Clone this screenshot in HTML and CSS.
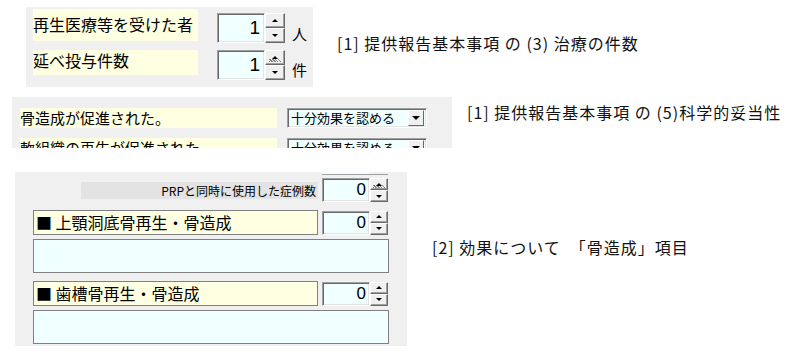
FILE: index.html
```html
<!DOCTYPE html>
<html lang="ja">
<head>
    <meta charset="UTF-8">
    <title>提供報告</title>
    <link rel="stylesheet" href="styles.css">
</head>
<body>
    <!-- [1] (3) 治療の件数 -->
    <div class="section sec-count">
        <div class="panel panel-count">
            <div class="count-row row-a">
                <div class="label label-a">再生医療等を受けた者</div>
                <div class="spin">
                    <div class="spin-val">1</div>
                    <div class="spin-btns">
                        <span class="btn"><i class="tri-up"></i></span>
                        <span class="btn"><i class="tri-down"></i></span>
                    </div>
                </div>
                <div class="unit">人</div>
            </div>
            <div class="count-row row-b">
                <div class="label label-b">延べ投与件数</div>
                <div class="spin">
                    <div class="spin-val">1</div>
                    <div class="spin-btns">
                        <span class="btn hatched"><i class="tri-up"></i></span>
                        <span class="btn"><i class="tri-down"></i></span>
                    </div>
                </div>
                <div class="unit">件</div>
            </div>
        </div>
        <div class="heading h-count">[1] 提供報告基本事項 の (3) 治療の件数</div>
    </div>

    <!-- [1] (5) 科学的妥当性 -->
    <div class="section sec-valid">
        <div class="panel panel-valid">
            <div class="valid-row">
                <div class="label label-wide">骨造成が促進された。</div>
                <div class="combo">
                    <span class="combo-text">十分効果を認める</span>
                    <span class="combo-btn"><i class="tri-down"></i></span>
                </div>
            </div>
            <div class="valid-row">
                <div class="label label-wide">軟組織の再生が促進された。</div>
                <div class="combo">
                    <span class="combo-text">十分効果を認める</span>
                    <span class="combo-btn"><i class="tri-down"></i></span>
                </div>
            </div>
        </div>
        <div class="heading h-valid">[1] 提供報告基本事項 の (5)科学的妥当性</div>
    </div>

    <!-- [2] 効果について -->
    <div class="section sec-effect">
        <div class="panel panel-effect">
            <div class="cut-spin"></div>
            <div class="prp-row">
                <div class="prp-label">PRPと同時に使用した症例数</div>
                <div class="spin spin-sm">
                    <div class="spin-val">0</div>
                    <div class="spin-btns">
                        <span class="btn hatched"><i class="tri-up"></i></span>
                        <span class="btn"><i class="tri-down"></i></span>
                    </div>
                </div>
            </div>
            <div class="item-row">
                <div class="item-title"><span class="sq">■</span> 上顎洞底骨再生・骨造成</div>
                <div class="spin spin-sm">
                    <div class="spin-val">0</div>
                    <div class="spin-btns">
                        <span class="btn"><i class="tri-up"></i></span>
                        <span class="btn"><i class="tri-down"></i></span>
                    </div>
                </div>
            </div>
            <div class="memo"></div>
            <div class="item-row">
                <div class="item-title"><span class="sq">■</span> 歯槽骨再生・骨造成</div>
                <div class="spin spin-sm">
                    <div class="spin-val">0</div>
                    <div class="spin-btns">
                        <span class="btn"><i class="tri-up"></i></span>
                        <span class="btn"><i class="tri-down"></i></span>
                    </div>
                </div>
            </div>
            <div class="memo"></div>
        </div>
        <div class="heading h-effect">[2] 効果について　「骨造成」項目</div>
    </div>
</body>
</html>
```

FILE: styles.css
```css
body {
    margin: 0;
    background: #fff;
    color: #000;
    font-family: "Noto Sans CJK JP", "Liberation Sans", sans-serif;
    font-size: 16px;
    width: 803px;
    height: 356px;
    overflow: hidden;
}
.section {
    display: flex;
    align-items: flex-start;
}
.panel {
    background-color: #f0f0f0;
    box-sizing: border-box;
}
.heading {
    font-size: 16px;
    line-height: 18px;
    letter-spacing: 1px;
    color: #111;
    white-space: pre;
}

/* section 1 */
.sec-count {
    height: 87px;
}
.panel-count {
    margin: 7px 0 0 26px;
    width: 287px;
    height: 80px;
    padding: 2px 0 0 7px;
}
.count-row {
    display: flex;
    align-items: flex-start;
}
.row-a {
    height: 41px;
}
.label {
    background-color: #ffffe1;
    line-height: 22px;
    white-space: nowrap;
}
.label-a {
    width: 165px;
    height: 32px;
    padding-top: 4px;
    box-sizing: border-box;
}
.label-b {
    width: 165px;
    height: 25px;
    line-height: 20px;
}
.count-row .spin {
    margin: 4px 0 0 19px;
}
.row-b .spin {
    margin-top: 0;
}
.unit {
    margin: 16px 0 0 7px;
    font-size: 15px;
    line-height: 18px;
}
.row-b .unit {
    margin-top: 11px;
}
.h-count {
    margin: 34px 0 0 24px;
}

/* spin box */
.spin {
    display: flex;
    height: 30px;
}
.spin-val {
    width: 48px;
    box-sizing: border-box;
    background-color: #f0ffff;
    border: 1px solid;
    border-color: #a0a0a0 #fff #fff #a0a0a0;
    box-shadow: inset 1px 1px 0 #696969, inset -1px -1px 0 #e3e3e3;
    text-align: right;
    padding: 0 4px 0 0;
    font-family: "Liberation Sans", sans-serif;
    font-size: 19px;
    line-height: 28px;
}
.spin-btns {
    display: flex;
    flex-direction: column;
    width: 20px;
}
.btn {
    flex: 1;
    display: flex;
    align-items: center;
    justify-content: center;
    background-color: #f0f0f0;
    border: 1px solid;
    border-color: #fff #696969 #696969 #fff;
    box-shadow: inset -1px -1px 0 #a0a0a0;
}
.btn.hatched {
    background-image: repeating-linear-gradient(45deg, #808080 0 1px, #f0f0f0 1px 2px);
    background-size: 12px 3px;
    background-repeat: no-repeat;
    background-position: center 8px;
}
.tri-up, .tri-down {
    display: block;
    width: 0;
    height: 0;
    border-left: 3px solid transparent;
    border-right: 3px solid transparent;
}
.tri-up {
    border-bottom: 3px solid #000;
}
.tri-down {
    border-top: 3px solid #000;
}

/* section 2 */
.sec-valid {
    margin-top: 10px;
}
.panel-valid {
    margin-left: 12px;
    width: 440px;
    height: 51px;
    overflow: hidden;
    padding: 11px 0 0 8px;
}
.valid-row {
    display: flex;
    align-items: flex-start;
    height: 30px;
}
.label-wide {
    width: 257px;
    height: 20px;
    line-height: 20px;
    font-size: 15px;
}
.combo {
    margin-left: 10px;
    width: 140px;
    height: 20px;
    box-sizing: border-box;
    display: flex;
    align-items: center;
    background-color: #f0ffff;
    border: 1px solid;
    border-color: #a0a0a0 #fff #fff #a0a0a0;
    box-shadow: inset 1px 1px 0 #696969, inset -1px -1px 0 #e3e3e3;
    padding: 2px;
}
.combo-text {
    flex: 1;
    font-size: 13px;
    line-height: 16px;
    padding-left: 1px;
}
.combo-btn {
    width: 16px;
    height: 16px;
    box-sizing: border-box;
    display: flex;
    align-items: center;
    justify-content: center;
    background-color: #f0f0f0;
    border: 1px solid;
    border-color: #fff #696969 #696969 #fff;
}
.combo-btn .tri-down {
    border-left-width: 4px;
    border-right-width: 4px;
    border-top-width: 4px;
}
.h-valid {
    margin: 6px 0 0 15px;
}

/* section 3 */
.sec-effect {
    margin-top: 24px;
}
.panel-effect {
    margin-left: 15px;
    width: 392px;
    height: 174px;
    padding: 0 0 0 18px;
}
.cut-spin {
    margin-left: 289px;
    width: 66px;
    height: 3px;
    border-bottom: 1px solid #a0a0a0;
    background: linear-gradient(to right, #f0ffff 47px, #f0f0f0 47px);
    box-sizing: border-box;
}
.prp-row {
    display: flex;
    align-items: center;
    margin: 3px 0 0 48px;
}
.prp-label {
    width: 237px;
    height: 17px;
    background-color: #e3e3e3;
    font-size: 12px;
    line-height: 17px;
    text-align: right;
    padding-right: 2px;
    box-sizing: border-box;
}
.spin-sm {
    height: 24px;
    margin-left: 4px;
}
.spin-sm .spin-val {
    font-size: 17px;
    line-height: 22px;
    padding-right: 3px;
}
.spin-sm .spin-btns {
    width: 18px;
}
.spin-sm .btn.hatched {
    background-position: center 6px;
}
.item-row {
    display: flex;
    align-items: center;
    margin-top: 8px;
}
.item-title {
    width: 285px;
    height: 25px;
    box-sizing: border-box;
    background-color: #ffffe1;
    border: 1px solid #808080;
    font-size: 16px;
    line-height: 22px;
    padding-left: 2px;
    white-space: pre;
}
.sq {
    font-size: 16px;
}
.item-row .spin-sm {
    margin-left: 4px;
}
.memo {
    margin-top: 4px;
    width: 356px;
    height: 34px;
    box-sizing: border-box;
    background-color: #f0ffff;
    border: 1px solid #808080;
}
.h-effect {
    margin: 66px 0 0 25px;
}
```
